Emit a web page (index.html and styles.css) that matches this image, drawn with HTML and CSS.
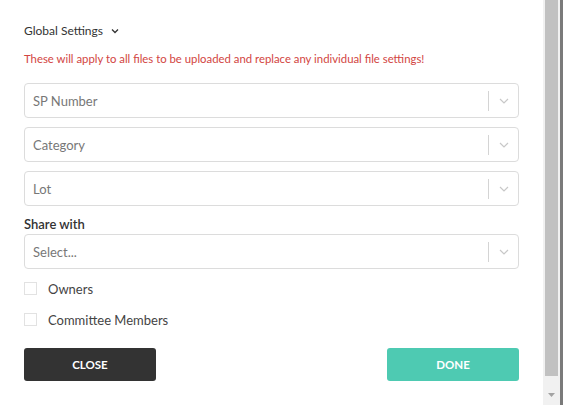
FILE: index.html
```html
<!DOCTYPE html>
<html>
<head>
<meta charset="utf-8">
<link rel="stylesheet" href="styles.css">
</head>
<body>
<div class="frame">
  <div class="modal">
    <div class="heading">Global Settings <svg class="caret" width="8" height="6" viewBox="0 0 8 6"><path d="M1 1.5 L4 4.5 L7 1.5" fill="none" stroke="#333" stroke-width="1.3"/></svg></div>
    <p class="warning">These will apply to all files to be uploaded and replace any individual file settings!</p>
    <div class="fields">
      <div class="select"><span class="ph">SP Number</span><span class="ind"><svg width="10" height="6" viewBox="0 0 10 6"><path d="M1 1 L5 5 L9 1" fill="none" stroke="#c8c8c8" stroke-width="1.2"/></svg></span></div>
      <div class="select"><span class="ph">Category</span><span class="ind"><svg width="10" height="6" viewBox="0 0 10 6"><path d="M1 1 L5 5 L9 1" fill="none" stroke="#c8c8c8" stroke-width="1.2"/></svg></span></div>
      <div class="select"><span class="ph">Lot</span><span class="ind"><svg width="10" height="6" viewBox="0 0 10 6"><path d="M1 1 L5 5 L9 1" fill="none" stroke="#c8c8c8" stroke-width="1.2"/></svg></span></div>
    </div>
    <div class="label">Share with</div>
    <div class="select"><span class="ph">Select...</span><span class="ind"><svg width="10" height="6" viewBox="0 0 10 6"><path d="M1 1 L5 5 L9 1" fill="none" stroke="#c8c8c8" stroke-width="1.2"/></svg></span></div>
    <div class="checks">
      <label class="check"><span class="box"></span>Owners</label>
      <label class="check"><span class="box"></span>Committee Members</label>
    </div>
    <div class="actions">
      <button class="btn btn-close">CLOSE</button>
      <button class="btn btn-done">DONE</button>
    </div>
  </div>
  <div class="scrollbar">
    <div class="thumb"></div>
    <div class="arrow"><svg width="7" height="4" viewBox="0 0 7 4"><path d="M0 0 H7 L3.5 4 Z" fill="#a3a3a3"/></svg></div>
  </div>
  <div class="edge"></div>
</div>
</body>
</html>
```
FILE: styles.css
```css
html, body {
  margin: 0;
  padding: 0;
  background: #fff;
}
body {
  font-family: Lato, "Open Sans", sans-serif;
  color: #333;
}
.frame {
  display: flex;
  width: 563px;
  height: 405px;
  overflow: hidden;
}
.modal {
  width: 495px;
  padding: 22px 25px 0 24px;
  flex: none;
}
.heading {
  font-size: 12px;
  color: #333;
  display: flex;
  align-items: center;
  gap: 8px;
  height: 16px;
}
.caret { margin-top: 1px; }
.warning {
  margin: 13px 0 0;
  font-size: 11.35px;
  color: #d24542;
  line-height: 15px;
}
.fields {
  margin-top: 17px;
  display: flex;
  flex-direction: column;
  gap: 9px;
}
.select {
  height: 33px;
  border: 1px solid #dcdcdc;
  border-radius: 4px;
  display: flex;
  align-items: center;
  justify-content: space-between;
  box-sizing: content-box;
}
.ph {
  padding-left: 8px;
  font-size: 13px;
  color: #777;
}
.ind {
  border-left: 1px solid #d4d4d4;
  height: 20px;
  width: 29px;
  display: flex;
  align-items: center;
  justify-content: center;
}
.label {
  margin-top: 9px;
  font-size: 13px;
  font-weight: 600;
  color: #333;
  height: 19px;
  line-height: 18px;
}
.checks {
  margin-top: 13px;
  display: flex;
  flex-direction: column;
  gap: 18px;
}
.check {
  display: flex;
  align-items: center;
  gap: 11px;
  font-size: 13px;
  color: #444;
  height: 13px;
}
.box {
  width: 11px;
  height: 11px;
  border: 1px solid #e2e2e2;
}
.actions {
  margin-top: 22px;
  display: flex;
  justify-content: space-between;
}
.btn {
  width: 132px;
  height: 33px;
  border: none;
  border-radius: 3px;
  color: #fff;
  font-family: Lato, sans-serif;
  font-weight: 700;
  font-size: 11.5px;
}
.btn-close { background: #333; }
.btn-done { background: #4ecab2; }
.scrollbar {
  margin-left: -1px;
  width: 17px;
  background: #f1f1f1;
  display: flex;
  flex-direction: column;
  align-items: center;
  flex: none;
}
.thumb {
  width: 13px;
  flex: 1;
  background: #c1c1c1;
  margin-bottom: 17px;
}
.arrow {
  height: 12px;
  display: flex;
  align-items: flex-start;
  justify-content: center;
}
.edge {
  flex: 1;
  background: #7a7a7a;
}
```
